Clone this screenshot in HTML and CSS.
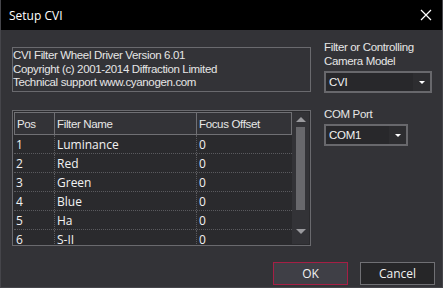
FILE: index.html
```html
<!DOCTYPE html>
<html lang="en">
<head>
    <meta charset="UTF-8">
    <title>Setup CVI</title>
    <link rel="stylesheet" href="styles.css">
</head>
<body>
    <div class="window">
        <div class="titlebar">
            <span class="title">Setup CVI</span>
            <svg class="close" width="12" height="12" viewBox="0 0 12 12">
                <path d="M1 1 L11 11 M11 1 L1 11" stroke="#fff" stroke-width="1.2"/>
            </svg>
        </div>
        <div class="content">
            <div class="left">
                <div class="info">
                    <div>CVI Filter Wheel Driver Version 6.01</div>
                    <div>Copyright (c) 2001-2014 Diffraction Limited</div>
                    <div>Technical support www.cyanogen.com</div>
                </div>
                <div class="grid-box">
                    <div class="grid">
                        <div class="row head">
                            <div class="cell pos">Pos</div>
                            <div class="cell name">Filter Name</div>
                            <div class="cell offset">Focus Offset</div>
                        </div>
                        <div class="row"><div class="cell pos">1</div><div class="cell name">Luminance</div><div class="cell offset">0</div></div>
                        <div class="row"><div class="cell pos">2</div><div class="cell name">Red</div><div class="cell offset">0</div></div>
                        <div class="row"><div class="cell pos">3</div><div class="cell name">Green</div><div class="cell offset">0</div></div>
                        <div class="row"><div class="cell pos">4</div><div class="cell name">Blue</div><div class="cell offset">0</div></div>
                        <div class="row"><div class="cell pos">5</div><div class="cell name">Ha</div><div class="cell offset">0</div></div>
                        <div class="row"><div class="cell pos">6</div><div class="cell name">S-II</div><div class="cell offset">0</div></div>
                    </div>
                    <div class="scrollbar">
                        <div class="arrow up"></div>
                        <div class="thumb"></div>
                        <div class="arrow down"></div>
                    </div>
                </div>
            </div>
            <div class="right">
                <div class="label">Filter or Controlling<br>Camera Model</div>
                <div class="combo wide">
                    <span class="combo-text">CVI</span>
                    <span class="combo-btn"><span class="caret"></span></span>
                </div>
                <div class="label com">COM Port</div>
                <div class="combo narrow">
                    <span class="combo-text">COM1</span>
                    <span class="combo-btn"><span class="caret"></span></span>
                </div>
            </div>
        </div>
        <div class="buttons">
            <button class="btn ok">OK</button>
            <button class="btn cancel">Cancel</button>
        </div>
    </div>
</body>
</html>
```

FILE: styles.css
```css
body {
    margin: 0;
    background: #333337;
    font-family: "Liberation Sans", Arial, sans-serif;
}
.window {
    width: 443px;
    height: 288px;
    box-sizing: border-box;
    border: 1px solid #45454a;
    border-top: none;
    background: #333337;
    display: flex;
    flex-direction: column;
}
.titlebar {
    height: 30px;
    flex: none;
    background: #000;
    display: flex;
    align-items: center;
    justify-content: space-between;
    padding: 0 10px 0 8px;
    box-sizing: border-box;
}
.title {
    font-family: "Open Sans", sans-serif;
    font-size: 12px;
    color: #fff;
}
.close {
    display: block;
}
.content {
    display: flex;
    padding: 17px 0 0 11px;
    gap: 13px;
}
.left {
    width: 299px;
    display: flex;
    flex-direction: column;
    gap: 18px;
}
.info {
    height: 45px;
    box-sizing: border-box;
    border: 1px solid #6a6a6e;
    padding: 1px 0 0 0;
    font-size: 11.5px;
    letter-spacing: -0.35px;
    line-height: 13.5px;
    color: #e6e6e6;
}
.grid-box {
    height: 136px;
    box-sizing: border-box;
    border: 1px solid #6a6a6e;
    padding: 1px;
    display: flex;
    overflow: hidden;
    background: #2a2a2d;
}
.grid {
    width: 278px;
    flex: none;
}
.row {
    display: flex;
    height: 19px;
    border-bottom: 1px dotted #5a5a5e;
    box-sizing: border-box;
    font-family: "Open Sans", sans-serif;
    font-size: 12px;
    color: #f2f2f2;
}
.row.head {
    height: 23px;
    background: #333337;
    border: 1px solid #707074;
    font-family: "Liberation Sans", Arial, sans-serif;
    font-size: 11.5px;
    letter-spacing: -0.35px;
    color: #e8e8e8;
}
.cell {
    display: flex;
    align-items: center;
    padding-left: 2px;
    box-sizing: border-box;
    white-space: nowrap;
}
.row .cell + .cell {
    border-left: 1px dotted #5a5a5e;
}
.row.head .cell + .cell {
    border-left: 1px solid #707074;
}
.pos { width: 40px; }
.name { width: 142px; }
.offset { width: 96px; }
.row.head .pos { width: 39px; }
.row.head .offset { width: 95px; }
.scrollbar {
    width: 17px;
    flex: none;
    background: #333337;
    display: flex;
    flex-direction: column;
    align-items: center;
}
.arrow {
    width: 0;
    height: 0;
    border-left: 5px solid transparent;
    border-right: 5px solid transparent;
}
.arrow.up {
    margin-top: 5px;
    border-bottom: 5px solid #9a9a9e;
}
.arrow.down {
    margin-top: 19px;
    border-top: 5px solid #9a9a9e;
}
.thumb {
    margin-top: 5px;
    width: 9px;
    height: 83px;
    background: #68686c;
}
.right {
    display: flex;
    flex-direction: column;
}
.label {
    font-size: 11.5px;
    letter-spacing: -0.35px;
    line-height: 14px;
    color: #e6e6e6;
    margin-top: -7px;
}
.label.com {
    margin-top: 14px;
}
.combo {
    margin-top: 3px;
    height: 22px;
    box-sizing: border-box;
    border: 2px solid #68686c;
    background: #28282b;
    display: flex;
    font-size: 11.5px;
    letter-spacing: -0.3px;
    color: #f2f2f2;
}
.combo.wide { width: 108px; }
.combo.narrow { width: 84px; margin-top: 3px; }
.combo-text {
    flex: 1;
    display: flex;
    align-items: center;
    padding-left: 3px;
}
.combo-btn {
    width: 17px;
    background: #2d2d30;
    display: flex;
    align-items: center;
    justify-content: center;
}
.caret {
    width: 0;
    height: 0;
    border-left: 3px solid transparent;
    border-right: 3px solid transparent;
    border-top: 3px solid #fff;
}
.buttons {
    margin-top: auto;
    display: flex;
    justify-content: flex-end;
    gap: 12px;
    padding: 0 7px 2px 0;
}
.btn {
    width: 75px;
    height: 23px;
    box-sizing: border-box;
    font-family: "Open Sans", sans-serif;
    font-size: 12px;
    color: #f2f2f2;
    padding: 0;
}
.btn.ok {
    background: #3f3f46;
    border: 1px solid #a51f45;
}
.btn.cancel {
    background: #262628;
    border: 1px solid #707074;
}
```
